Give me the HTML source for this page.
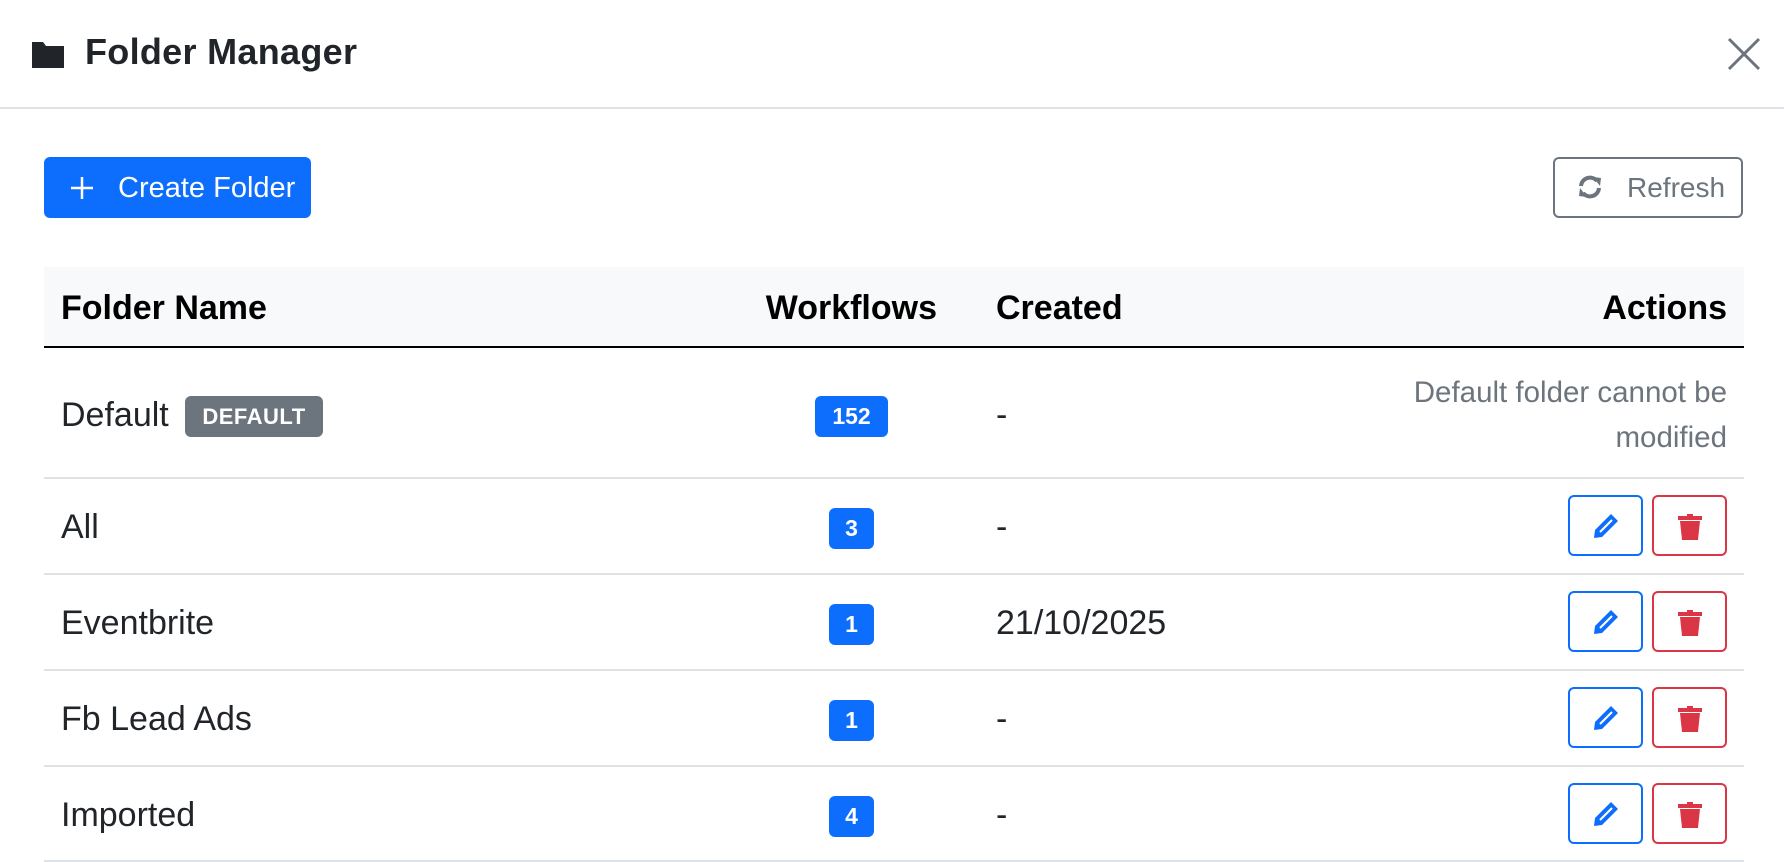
<!DOCTYPE html>
<html><head><meta charset="utf-8"><style>
*{margin:0;padding:0;box-sizing:border-box}
body{width:1784px;height:862px;background:#fff;font-family:"Liberation Sans",sans-serif;color:#212529;position:relative;overflow:hidden}
.a{position:absolute}
.t{position:absolute;white-space:nowrap;line-height:1}
.pill{position:absolute;background:#0d6efd;color:#fff;font-weight:bold;font-size:23px;border-radius:6px;display:flex;align-items:center;justify-content:center;height:41px}
.hl{position:absolute;left:44px;width:1700px;height:2px;background:#dee2e6}
.eb,.db{position:absolute;width:75px;height:61px;border-radius:6px;background:#fff;display:flex;align-items:center;justify-content:center}
.eb{border:2px solid #0d6efd;left:1568px}
.db{border:2px solid #dc3545;left:1652px}
.b{font-size:34px}
.h{font-size:34px;font-weight:bold;color:#000;top:291px}
</style></head><body>
<svg class="a" style="left:32px;top:42px" width="32" height="26" viewBox="0 0 32 26"><path d="M0 0H11L14 4H32V26H0Z" fill="#212529"/></svg>
<div class="t" style="left:85px;top:34px;font-size:36px;font-weight:bold;letter-spacing:0.3px">Folder Manager</div>
<svg class="a" style="left:1727px;top:37px" width="34" height="34" viewBox="0 0 34 34"><path d="M2 2L32 32M32 2L2 32" stroke="#6c757d" stroke-width="3"/></svg>
<div class="a" style="left:0;top:107px;width:1784px;height:2px;background:#dee2e6"></div>

<div class="a" style="left:44px;top:157px;width:267px;height:61px;background:#0d6efd;border-radius:6px"></div>
<svg class="a" style="left:70px;top:176px" width="24" height="24" viewBox="0 0 24 24"><path d="M12 1V23M1 12H23" stroke="#fff" stroke-width="2.5"/></svg>
<div class="t" style="left:118px;top:174px;font-size:29px;color:#fff">Create Folder</div>

<div class="a" style="left:1553px;top:157px;width:190px;height:61px;border:2px solid #6c757d;border-radius:6px"></div>
<svg class="a" style="left:1576px;top:175px" width="28" height="24" viewBox="0 0 28 24"><path d="M5 11A9 9 0 0 1 21 6" stroke="#6c757d" stroke-width="4" fill="none"/><path d="M17 2L25 3L24 11Z" fill="#6c757d"/><path d="M23 13A9 9 0 0 1 7 18" stroke="#6c757d" stroke-width="4" fill="none"/><path d="M11 22L3 21L4 13Z" fill="#6c757d"/></svg>
<div class="t" style="left:1627px;top:174px;font-size:28px;color:#6c757d">Refresh</div>

<div class="a" style="left:44px;top:267px;width:1700px;height:80px;background:#f8f9fa"></div>
<div class="a" style="left:44px;top:346px;width:1700px;height:2px;background:#000"></div>
<div class="t h" style="left:61px">Folder Name</div>
<div class="t h" style="left:737px;width:200px;text-align:right">Workflows</div>
<div class="t h" style="left:996px">Created</div>
<div class="t h" style="left:1527px;width:200px;text-align:right">Actions</div>

<!-- row 1 -->
<div class="t b" style="left:61px;top:398px">Default</div>
<div class="a" style="left:185px;top:396px;width:138px;height:41px;background:#6c757d;border-radius:6px;color:#fff;font-weight:bold;font-size:22px;display:flex;align-items:center;justify-content:center;letter-spacing:0.5px">DEFAULT</div>
<div class="pill" style="left:815px;top:396px;width:73px">152</div>
<div class="t b" style="left:996px;top:398px">-</div>
<div class="a" style="left:1227px;top:370px;width:500px;text-align:right;font-size:29.5px;line-height:45px;color:#6c757d">Default folder cannot be<br>modified</div>
<div class="hl" style="top:477px"></div>

<!-- row 2 -->
<div class="t b" style="left:61px;top:510px">All</div>
<div class="pill" style="left:829px;top:508px;width:45px">3</div>
<div class="t b" style="left:996px;top:510px">-</div>
<div class="eb" style="top:495px"><svg width="26" height="26" viewBox="0 0 26 26"><path d="M18 1L25 8L9 24L1 25L2 17Z" fill="#0d6efd"/><path d="M7 19L19 7" stroke="#fff" stroke-width="2"/></svg></div>
<div class="db" style="top:495px"><svg width="24" height="28" viewBox="0 0 24 28"><path d="M9 2H15V4H9Z" fill="#dc3545"/><rect x="0" y="4" width="24" height="4" fill="#dc3545"/><path d="M2 9H22L20 28H4Z" fill="#dc3545"/></svg></div>
<div class="hl" style="top:573px"></div>

<!-- row 3 -->
<div class="t b" style="left:61px;top:606px">Eventbrite</div>
<div class="pill" style="left:829px;top:604px;width:45px">1</div>
<div class="t b" style="left:996px;top:606px">21/10/2025</div>
<div class="eb" style="top:591px"><svg width="26" height="26" viewBox="0 0 26 26"><path d="M18 1L25 8L9 24L1 25L2 17Z" fill="#0d6efd"/><path d="M7 19L19 7" stroke="#fff" stroke-width="2"/></svg></div>
<div class="db" style="top:591px"><svg width="24" height="28" viewBox="0 0 24 28"><path d="M9 2H15V4H9Z" fill="#dc3545"/><rect x="0" y="4" width="24" height="4" fill="#dc3545"/><path d="M2 9H22L20 28H4Z" fill="#dc3545"/></svg></div>
<div class="hl" style="top:669px"></div>

<!-- row 4 -->
<div class="t b" style="left:61px;top:702px">Fb Lead Ads</div>
<div class="pill" style="left:829px;top:700px;width:45px">1</div>
<div class="t b" style="left:996px;top:702px">-</div>
<div class="eb" style="top:687px"><svg width="26" height="26" viewBox="0 0 26 26"><path d="M18 1L25 8L9 24L1 25L2 17Z" fill="#0d6efd"/><path d="M7 19L19 7" stroke="#fff" stroke-width="2"/></svg></div>
<div class="db" style="top:687px"><svg width="24" height="28" viewBox="0 0 24 28"><path d="M9 2H15V4H9Z" fill="#dc3545"/><rect x="0" y="4" width="24" height="4" fill="#dc3545"/><path d="M2 9H22L20 28H4Z" fill="#dc3545"/></svg></div>
<div class="hl" style="top:765px"></div>

<!-- row 5 -->
<div class="t b" style="left:61px;top:798px">Imported</div>
<div class="pill" style="left:829px;top:796px;width:45px">4</div>
<div class="t b" style="left:996px;top:798px">-</div>
<div class="eb" style="top:783px"><svg width="26" height="26" viewBox="0 0 26 26"><path d="M18 1L25 8L9 24L1 25L2 17Z" fill="#0d6efd"/><path d="M7 19L19 7" stroke="#fff" stroke-width="2"/></svg></div>
<div class="db" style="top:783px"><svg width="24" height="28" viewBox="0 0 24 28"><path d="M9 2H15V4H9Z" fill="#dc3545"/><rect x="0" y="4" width="24" height="4" fill="#dc3545"/><path d="M2 9H22L20 28H4Z" fill="#dc3545"/></svg></div>
<div class="hl" style="top:860px"></div>
</body></html>
